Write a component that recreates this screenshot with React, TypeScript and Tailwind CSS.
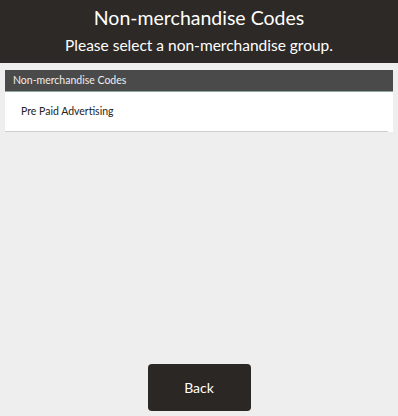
export default function App() {
  return (
    <div
      className="flex h-[416px] w-[398px] flex-col bg-[#eeeeee] text-[#222]"
      style={{ fontFamily: 'Lato, "Open Sans", sans-serif' }}
    >
      <header className="flex h-[63px] flex-col items-center bg-[#2d2926] pt-[5px] text-white">
        <h1 className="text-[19.5px] leading-[26px]">Non-merchandise Codes</h1>
        <p className="mt-[3px] text-[15.5px] leading-[22px]">Please select a non-merchandise group.</p>
      </header>

      <div className="mx-[5px] mt-[7px]">
        <div className="flex h-[22px] items-center border-b border-[#8fa8a0] bg-[#4a4a4a] px-[8px] text-[10.5px] text-[#eee]">
          Non-merchandise Codes
        </div>
        <div className="bg-white pr-[5px]">
          <div className="flex h-[40px] items-center border-b border-[#cfcfcf] pl-[16px] text-[10.5px] text-[#222]">
            Pre Paid Advertising
          </div>
        </div>
      </div>

      <div className="mt-auto flex justify-center pb-[5px]">
        <button className="h-[47px] w-[103px] rounded-[4px] bg-[#2b2725] text-[14px] text-white">
          Back
        </button>
      </div>
    </div>
  );
}
